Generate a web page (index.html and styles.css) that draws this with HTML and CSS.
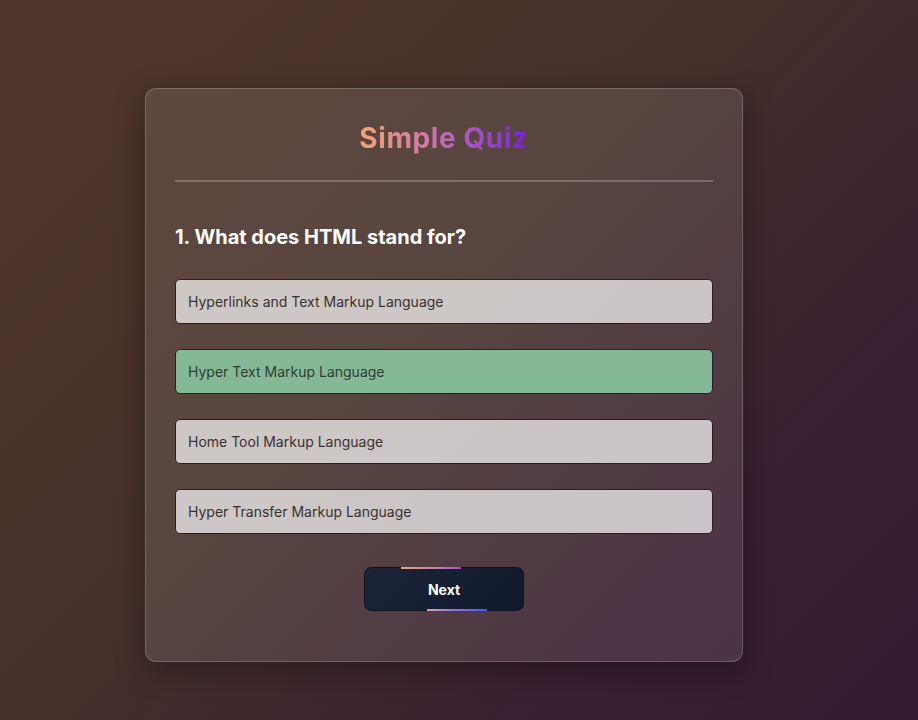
FILE: index.html
```html
<!DOCTYPE html>
<html lang="en">
<head>
<meta charset="utf-8">
<title>Simple Quiz</title>
<link rel="stylesheet" href="styles.css">
</head>
<body>
  <main class="quiz">
    <h1 class="quiz-title">Simple Quiz</h1>
    <hr class="quiz-divider">
    <h2 class="question">1. What does HTML stand for?</h2>
    <div class="answers">
      <button class="answer">Hyperlinks and Text Markup Language</button>
      <button class="answer correct">Hyper Text Markup Language</button>
      <button class="answer">Home Tool Markup Language</button>
      <button class="answer">Hyper Transfer Markup Language</button>
    </div>
    <div class="actions">
      <button class="next-btn">Next</button>
    </div>
  </main>
</body>
</html>
```
FILE: styles.css
```css
* { box-sizing: border-box; }
html, body { height: 100%; }
body {
  margin: 0;
  padding: 88px 0 0 145px;
  font-family: "Inter", "Noto Sans", sans-serif;
  background: linear-gradient(135deg, #51372a 0%, #45302a 45%, #3a2030 75%, #341a2f 100%);
  overflow: hidden;
}
.quiz {
  width: 598px;
  height: 574px;
  padding: 29px 29px;
  border: 1px solid rgba(255,255,255,0.2);
  border-radius: 11px;
  background: rgba(255,255,255,0.1);
  box-shadow: 0 8px 30px rgba(0,0,0,0.35);
}
.quiz-title {
  display: block;
  width: max-content;
  margin: 0 auto;
  font-size: 28px;
  line-height: 40px;
  font-weight: 700;
  letter-spacing: 0.6px;
  background: linear-gradient(90deg, #f2a573 0%, #cf79a6 40%, #a24ec8 70%, #7a1fdc 100%);
  -webkit-background-clip: text;
  background-clip: text;
  color: transparent;
}
.quiz-divider {
  margin: 22px 0 0;
  border: 0;
  height: 2px;
  background: rgba(255,255,255,0.22);
}
.question {
  margin: 42px 0 0;
  font-size: 20px;
  line-height: 26px;
  font-weight: 700;
  color: #fff;
  letter-spacing: 0;
}
.answers {
  margin-top: 29px;
  display: flex;
  flex-direction: column;
  gap: 25px;
}
.answer {
  height: 45px;
  padding: 0 12px;
  text-align: left;
  font-family: inherit;
  font-size: 14px;
  color: #3a3232;
  background: rgba(255,255,255,0.7);
  border: 1px solid #2a2020;
  border-radius: 5px;
}
.answer.correct {
  background: #85b897;
  color: #2e3e33;
}
.actions {
  margin-top: 33px;
  display: flex;
  justify-content: center;
}
.next-btn {
  position: relative;
  width: 160px;
  height: 44px;
  font-family: inherit;
  font-size: 14px;
  font-weight: 700;
  color: #fff;
  background: linear-gradient(135deg, #1c2438, #111a2c);
  border: 1px solid #0f1422;
  border-radius: 7px;
}
.next-btn::before,
.next-btn::after {
  content: "";
  position: absolute;
  height: 2px;
}
.next-btn::before {
  top: -1px;
  left: 36px;
  width: 60px;
  background: linear-gradient(90deg, #f0a272, #c080b0 60%, #a050d0);
}
.next-btn::after {
  bottom: -1px;
  left: 62px;
  width: 60px;
  background: linear-gradient(90deg, #d8a0b8, #8a70e0 50%, #3f5cf0);
}
```
